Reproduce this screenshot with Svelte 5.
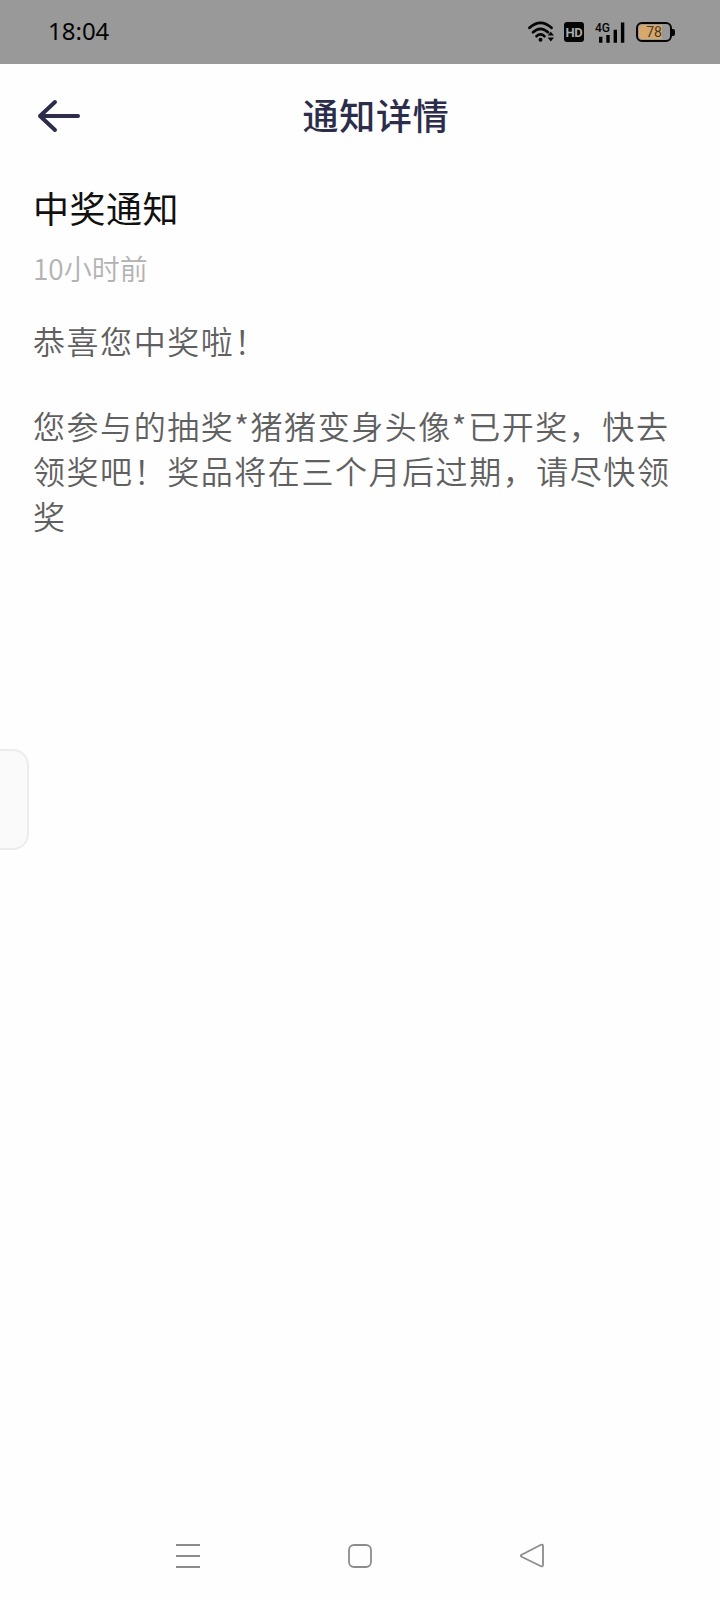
<script lang="ts">
	type Notice = {
		title: string;
		time: string;
		paragraphs: string[];
	};

	const clock = '18:04';
	const battery = 78;

	const notice: Notice = {
		title: '中奖通知',
		time: '10小时前',
		paragraphs: [
			'恭喜您中奖啦！',
			'您参与的抽奖*猪猪变身头像*已开奖，快去领奖吧！奖品将在三个月后过期，请尽快领奖'
		]
	};
</script>

<div class="screen">
	<div class="status">
		<span class="clock">{clock}</span>
		<div class="indicators">
			<svg class="wifi" viewBox="0 0 27 22" aria-hidden="true">
				<path d="M1.5 6.8 Q12.5 -3 23.5 6.8" />
				<path d="M5 11.2 Q12.5 4.4 20 11.2" />
				<path d="M8.5 15.2 Q12.5 11.6 16.5 15.2" />
				<circle cx="12.5" cy="18.8" r="2" />
				<path class="solid" d="M19.6 14.6 L22.8 10.8 L26 14.6 Z M19.6 16.4 L22.8 20.4 L26 16.4 Z" />
			</svg>
			<span class="hd">HD</span>
			<div class="signal">
				<svg viewBox="0 0 30 21" aria-hidden="true">
					<path d="M4 14.8h3.4v6h-3.4z M11.3 13h3.4v7.8h-3.4z M18.6 7.7h3.4v13.1h-3.4z M25.9 .4h3.4v20.4h-3.4z" />
				</svg>
				<span>4G</span>
			</div>
			<div class="battery">
				<div class="cell"><div class="charge" style="width: {battery}%"></div><span>{battery}</span></div>
				<i></i>
			</div>
		</div>
	</div>

	<header class="bar">
		<button class="back" aria-label="返回">
			<svg viewBox="0 0 44 36" aria-hidden="true">
				<path d="M18 4 L3 18 L18 32 M3 18 H41" />
			</svg>
		</button>
		<h1>通知详情</h1>
	</header>

	<main>
		<h2>{notice.title}</h2>
		<time>{notice.time}</time>
		<div class="content">
			{#each notice.paragraphs as text}
				<p>{text}</p>
			{/each}
		</div>
	</main>

	<!-- edge panel handle -->
	<div class="handle"></div>

	<nav>
		<svg viewBox="0 0 26 26" aria-hidden="true"><path d="M1 2h24M1 13h24M1 24h24" /></svg>
		<svg viewBox="0 0 26 26" aria-hidden="true"><rect x="2" y="2" width="22" height="22" rx="5" /></svg>
		<svg viewBox="0 0 26 26" aria-hidden="true"><path d="M2.6 11.8 L22 1.8 Q24 1 24 3.2 V21.8 Q24 24 22 23.2 L2.6 13.8 Q1 12.8 2.6 11.8 Z" /></svg>
	</nav>
</div>

<style>
	:global(body) {
		margin: 0;
	}

	.screen {
		position: relative;
		display: flex;
		flex-direction: column;
		width: 720px;
		height: 1600px;
		overflow: hidden;
		background: #fefefe;
		font-family: 'Noto Sans CJK SC', sans-serif;
	}

	/* ── status bar ── */
	.status {
		display: flex;
		align-items: center;
		justify-content: space-between;
		box-sizing: border-box;
		height: 64px;
		padding: 0 45px 0 48px;
		background: #999;
		color: #050505;
	}
	.clock {
		margin-top: -2px;
		font-family: 'Noto Sans', sans-serif;
		font-size: 24px;
		line-height: 62px;
	}
	.indicators {
		display: flex;
		align-items: center;
		height: 22px;
	}
	.wifi {
		width: 27px;
		height: 22px;
		margin-right: 9px;
		fill: none;
		stroke: #050505;
		stroke-width: 2.7;
		stroke-linecap: round;
	}
	.wifi circle,
	.wifi .solid {
		fill: #050505;
		stroke: none;
	}
	.hd {
		width: 20px;
		height: 20px;
		border-radius: 3px;
		background: #050505;
		color: #aaa;
		font: bold 13px/21px Roboto, sans-serif;
		letter-spacing: -0.3px;
		text-align: center;
	}
	.signal {
		position: relative;
		width: 30px;
		height: 21px;
		margin-left: 11px;
	}
	.signal svg {
		display: block;
		width: 30px;
		height: 21px;
	}
	.signal span {
		position: absolute;
		left: 0;
		top: 0;
		font: 500 12px/12px Roboto, sans-serif;
	}
	.battery {
		display: flex;
		align-items: center;
		margin-left: 11px;
	}
	.cell {
		position: relative;
		box-sizing: border-box;
		width: 36px;
		height: 20px;
		padding: 1px;
		border: 2px solid #050505;
		border-radius: 6px;
		overflow: hidden;
	}
	.charge {
		height: 100%;
		border-radius: 3px 0 0 3px;
		background: #d6a86c;
	}
	.cell span {
		position: absolute;
		inset: 0;
		font: 14px/17px Roboto, sans-serif;
		text-align: center;
		color: #4a3820;
	}
	.battery i {
		width: 3px;
		height: 7px;
		border-radius: 0 2px 2px 0;
		background: #050505;
	}

	/* ── title bar ── */
	.bar {
		display: grid;
		grid-template-columns: 82px 1fr 50px;
		align-items: center;
		height: 104px;
		color: #2b2d4a;
	}
	.back {
		display: flex;
		padding: 0 0 0 37px;
		border: 0;
		background: none;
	}
	.back svg {
		flex: none;
		width: 44px;
		height: 36px;
		fill: none;
		stroke: #2b2d4a;
		stroke-width: 4;
		stroke-linecap: round;
		stroke-linejoin: round;
	}
	h1 {
		margin: -4px 0 0;
		font-size: 36px;
		font-weight: 500;
		letter-spacing: 0.7px;
		line-height: 52px;
		text-align: center;
	}

	/* ── notice ── */
	main {
		flex: 1;
		padding: 14px 32px 0 33px;
	}
	h2 {
		margin: 0;
		font-size: 36px;
		font-weight: 400;
		letter-spacing: 0.5px;
		line-height: 50px;
		color: #111;
	}
	time {
		display: block;
		margin-top: 16px;
		font-size: 28px;
		font-weight: 350;
		line-height: 40px;
		color: #b2b2b2;
	}
	.content {
		margin-top: 30px;
		font-size: 32px;
		font-weight: 350;
		line-height: 45px;
		letter-spacing: 1.55px;
		color: #606060;
	}
	p {
		margin: 0 0 40px;
	}

	.handle {
		position: absolute;
		left: -20px;
		top: 749px;
		box-sizing: border-box;
		width: 49px;
		height: 101px;
		border: 2px solid #ececec;
		border-radius: 16px;
		background: #fafafa;
	}

	nav {
		display: flex;
		justify-content: space-between;
		padding: 0 175px 31px;
	}
	nav svg {
		width: 26px;
		height: 26px;
		fill: none;
		stroke: #8c8c8c;
		stroke-width: 1.8;
	}
</style>
